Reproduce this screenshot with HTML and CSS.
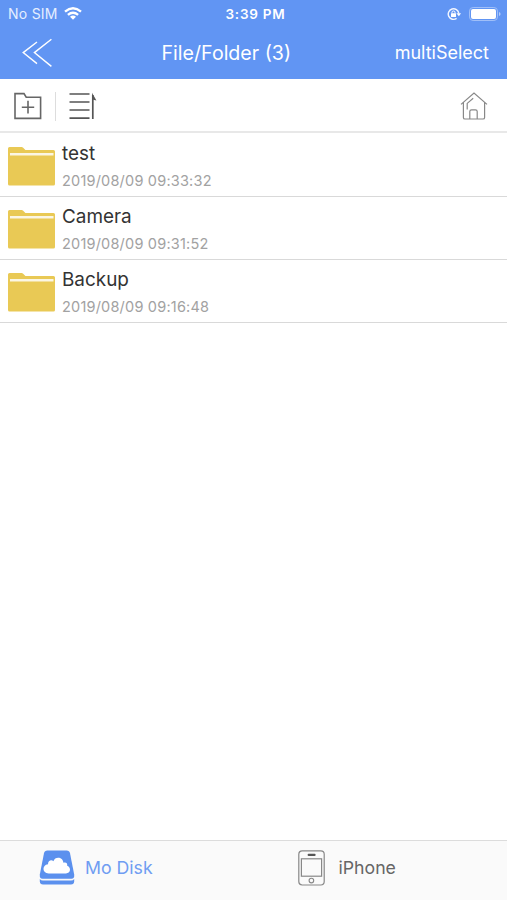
FILE: index.html
```html
<!DOCTYPE html>
<html lang="en">
<head>
    <meta charset="UTF-8">
    <meta name="viewport" content="width=device-width, initial-scale=1.0">
    <title>File/Folder</title>
    <link rel="stylesheet" href="styles.css">
</head>
<body>
    <svg class="symbols" width="0" height="0">
        <symbol id="folder" viewBox="0 0 48 40">
            <path fill="#e9c955" d="M0 2.5Q0 1 1.5 1H13.5Q14.5 1 15.2 1.8L17.4 4H45.5Q47 4 47 5.5V38Q47 39.5 45.5 39.5H1.5Q0 39.5 0 38Z"/>
            <path fill="#fbf6e4" d="M2 7H45.5V9.6H2Z"/>
        </symbol>
    </svg>
    <div class="app">
        <header class="header">
            <div class="status-bar">
                <div class="status-left">
                    <span class="carrier">No SIM</span>
                    <svg class="wifi" width="18" height="13" viewBox="0 0 18 13">
                        <path fill="none" stroke="#fff" stroke-width="2.4" d="M1 4.7Q9 -2 17 4.7M3.9 7.9Q9 3.6 14.1 7.9"/>
                        <path fill="#fff" d="M6 9.8Q9 7.4 12 9.8L9 12.8Z"/>
                    </svg>
                </div>
                <span class="status-time">3:39 PM</span>
                <div class="status-right">
                    <svg width="14" height="14" viewBox="0 0 14 14">
                        <path fill="none" stroke="#f2f6ff" stroke-width="1.4" d="M9.6 11.4A5.3 5.3 0 1 1 11.8 6.4"/>
                        <path fill="#fff" d="M9.4 6.2H14L11.9 9.2Z"/>
                        <rect x="4" y="6.2" width="5" height="3.8" rx=".5" fill="#fff"/>
                        <path fill="none" stroke="#fff" d="M5 6.5V5.3Q5 4 6.5 4T8 5.3V6.5"/>
                    </svg>
                    <svg width="32" height="14" viewBox="0 0 32 14">
                        <rect x=".5" y=".5" width="28" height="13" rx="3.6" fill="none" stroke="#a0bff8"/>
                        <rect x="2" y="2" width="25" height="10" rx="2" fill="#fff"/>
                        <path fill="#b3ccfa" d="M30 5Q31.6 5.6 31.6 7T30 9Z"/>
                    </svg>
                </div>
            </div>
            <div class="nav-bar">
                <svg class="nav-back" width="32" height="30" viewBox="0 0 32 30">
                    <path fill="none" stroke="#fff" stroke-width="1.4" d="M15 4L1.2 14.6L15 25.6M29.4 1.2L12.4 14.6L29.4 28.4"/>
                </svg>
                <h1 class="nav-title">File/Folder (3)</h1>
                <span class="nav-action">multiSelect</span>
            </div>
        </header>

        <div class="toolbar">
            <svg class="tool-add" width="28" height="28" viewBox="0 0 28 28">
                <path fill="none" stroke="#666" stroke-width="1.6" d="M1 1.6H10L12.2 5.2H26.6V26.4H1ZM14 8.7V21.6M7.8 15.2H20.2"/>
            </svg>
            <span class="tool-divider"></span>
            <svg class="tool-sort" width="28" height="28" viewBox="0 0 28 28">
                <path fill="none" stroke="#555" stroke-width="1.7" d="M.5 2H20.5M.5 10H20.5M.5 18H20.5M.5 26.2H20.5M23.8 27V3"/>
                <path fill="#555" d="M23 .8L27.4 8.6L23.4 7.4Z"/>
            </svg>
            <svg class="tool-home" width="28" height="30" viewBox="0 0 28 30">
                <path fill="none" stroke="#888" stroke-width="1.2" d="M1 13.4L14 2L27 13.4M3.4 11.6V26.4Q3.4 28 5 28H23Q24.6 28 24.6 26.4V11.6M9.8 28V20.6Q9.8 18.8 11.6 18.8H15.4Q17.2 18.8 17.2 20.6V28M7.2 18.6V12.4L13.2 7.2"/>
            </svg>
        </div>

        <ul class="file-list">
            <li class="file-item">
                <svg class="file-icon"><use href="#folder"/></svg>
                <div class="file-info">
                    <p class="file-name">test</p>
                    <p class="file-date">2019/08/09 09:33:32</p>
                </div>
            </li>
            <li class="file-item">
                <svg class="file-icon"><use href="#folder"/></svg>
                <div class="file-info">
                    <p class="file-name">Camera</p>
                    <p class="file-date">2019/08/09 09:31:52</p>
                </div>
            </li>
            <li class="file-item">
                <svg class="file-icon"><use href="#folder"/></svg>
                <div class="file-info">
                    <p class="file-name">Backup</p>
                    <p class="file-date">2019/08/09 09:16:48</p>
                </div>
            </li>
        </ul>

        <footer class="tab-bar">
            <div class="tab tab-disk active">
                <svg width="36" height="36" viewBox="0 0 36 36">
                    <path fill="#5b90ee" d="M8.4 .5H27.6Q30.4 .5 31 3.2L35.2 24.5Q35.6 28.8 32.5 28.8H3.5Q.4 28.8 .8 24.5L5 3.2Q5.6 .5 8.4 .5Z"/>
                    <path fill="#5b90ee" d="M.8 29Q2 30.6 4 30.6H32Q34 30.6 35.2 29V31.5Q35 34.4 32 34.4H4Q1 34.4 .8 31.5Z"/>
                    <path fill="#fff" d="M9.6 23.4C3 23.4 2.8 14.8 9 14.2C8.8 10.6 12.6 9.2 14.4 11.2C16 5.8 24.2 6.8 24.4 12.8C27.6 11.8 28.6 14.2 28.2 15.8C32.6 17.6 31.6 23.4 27 23.4Z"/>
                </svg>
                <span class="tab-label">Mo Disk</span>
            </div>
            <div class="tab tab-phone">
                <svg width="27" height="36" viewBox="0 0 27 36">
                    <rect x=".8" y=".8" width="25.4" height="34.2" rx="3.4" fill="none" stroke="#888" stroke-width="1.2"/>
                    <rect x="3.4" y="8.8" width="20.2" height="17.4" fill="none" stroke="#888" stroke-width="1.2"/>
                    <rect x="9.6" y="3.7" width="8" height="2.3" rx="1" fill="#555"/>
                    <circle cx="13.4" cy="30.6" r="2.3" fill="none" stroke="#888" stroke-width="1.1"/>
                </svg>
                <span class="tab-label">iPhone</span>
            </div>
        </footer>
    </div>
</body>
</html>
```

FILE: styles.css
```css
* {
    margin: 0;
    padding: 0;
    box-sizing: border-box;
    font-family: Inter, "Liberation Sans", sans-serif;
}

body {
    background: #fff;
    color: #333;
}

.symbols {
    display: block;
}

.app {
    height: 100vh;
    display: flex;
    flex-direction: column;
}

.header {
    height: 79px;
    background: #6195f3;
    color: #fff;
}

.status-bar {
    height: 27px;
    display: grid;
    grid-template-columns: 1fr auto 1fr;
    align-items: center;
    padding: 0 6px 0 8px;
    font-size: 14px;
}

.status-left,
.status-right {
    display: flex;
    align-items: center;
}

.carrier {
    color: #e5eeff;
    letter-spacing: 0.25px;
}

.wifi {
    margin-left: 6px;
}

.status-time {
    padding-left: 2px;
    font-size: 13.5px;
    font-weight: 600;
    letter-spacing: 0.75px;
}

.status-right {
    justify-content: flex-end;
    gap: 8px;
}

.nav-bar {
    height: 52px;
    display: flex;
    justify-content: space-between;
    align-items: center;
    padding: 0 18px 0 22px;
}

.nav-back {
    margin-right: 4px;
}

.nav-title {
    font-size: 19.6px;
    font-weight: 400;
}

.nav-action {
    padding-bottom: 2px;
    font-size: 18px;
}

.toolbar {
    height: 54px;
    display: flex;
    align-items: center;
    padding: 2px 19px 0 14px;
    border-bottom: 2px solid #e8e8e8;
}

.tool-divider {
    width: 1px;
    height: 29px;
    margin: 0 13px;
    background: #ddd;
}

.tool-home {
    margin-left: auto;
}

.file-list {
    flex: 1;
    padding-top: 1px;
    list-style: none;
}

.file-item {
    height: 63px;
    display: flex;
    align-items: flex-start;
    padding: 12px 8px 0;
    border-bottom: 1px solid #d9d9d9;
}

.file-icon {
    width: 48px;
    height: 40px;
}

.file-info {
    margin: -5px 0 0 6px;
}

.file-name {
    font-size: 18.9px;
    line-height: 26px;
}

.file-date {
    margin-top: 3px;
    font-size: 14.5px;
    line-height: 22px;
    letter-spacing: 0.2px;
    color: #a2a2a2;
}

.tab-bar {
    height: 60px;
    display: grid;
    grid-template-columns: 1fr 1fr;
    background: #fafafa;
    border-top: 1px solid #dcdcdc;
}

.tab {
    display: flex;
    align-items: center;
    padding-bottom: 5px;
    font-size: 17.7px;
    color: #666;
}

.tab-label {
    padding-bottom: 2px;
}

.tab-disk {
    padding-left: 39px;
    gap: 10px;
}

.tab-phone {
    padding-left: 44px;
    gap: 14px;
}

.tab.active {
    color: #6f9df2;
}
```
